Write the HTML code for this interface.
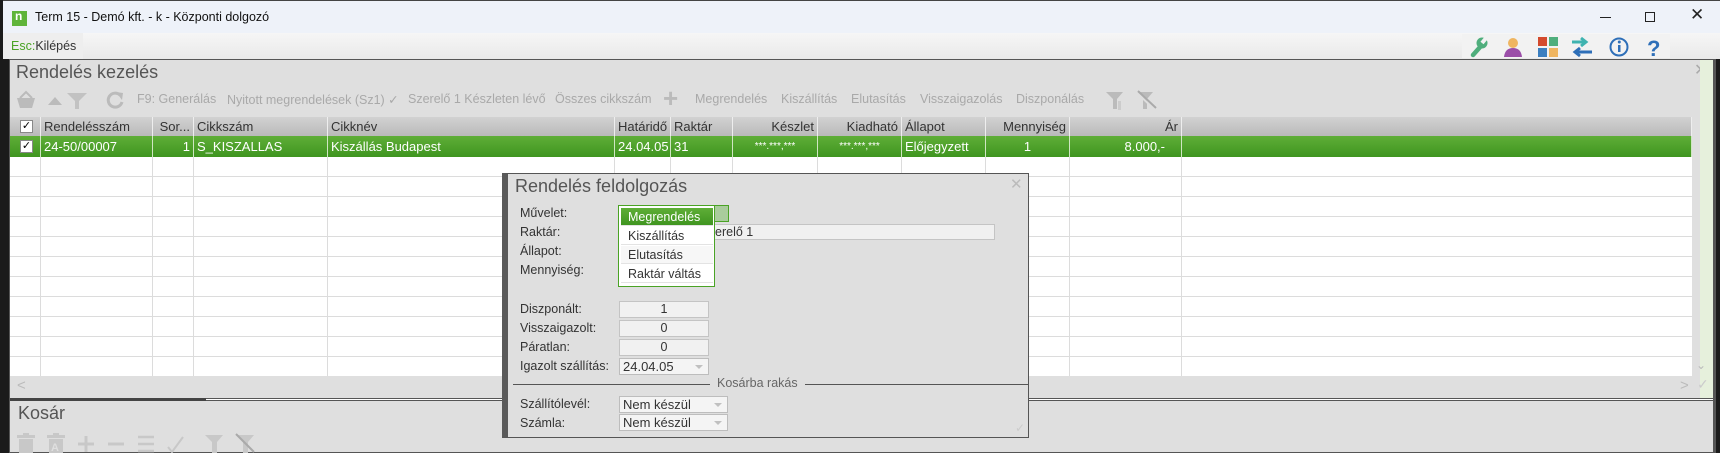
<!DOCTYPE html>
<html><head><meta charset="utf-8"><style>
*{box-sizing:border-box;margin:0;padding:0}
body{width:1720px;height:453px;overflow:hidden;background:#1b1b1b;font-family:"Liberation Sans",Arial,sans-serif;color:#333;position:relative}
.a{position:absolute}
.t{position:absolute;white-space:nowrap}
.tb{font-size:12.5px;color:#a9a9a9;top:92px}
.hd{position:absolute;top:117px;height:19px;background:linear-gradient(#d2d2d2,#b9b9b9);border-right:1px solid #eee;font-size:13px;line-height:19px;padding:0 3px;color:#333}
.gr{position:absolute;top:136px;height:21px;background:linear-gradient(#5fae37,#3f9520);border-right:1px solid #cfe6c2;font-size:13px;line-height:21px;padding:0 3px;color:#fff}
.vl{position:absolute;top:157px;height:219px;width:1px;background:#dcdcdc}
.hl{position:absolute;left:10px;width:1682px;height:1px;background:#dcdcdc}
.lb{position:absolute;left:520px;font-size:12.5px;color:#333}
.fld{position:absolute;left:619px;width:90px;height:17px;background:#f1f1f1;border:1px solid #c4c4c4;font-size:12.5px;line-height:15px;text-align:center}
.dd{position:absolute;left:619px;height:17px;background:#f4f4f4;border:1px solid #bdbdbd;font-size:13px;line-height:15px;padding-left:3px}
.arr{position:absolute;right:5px;top:6px;width:0;height:0;border-left:4px solid transparent;border-right:4px solid transparent;border-top:4px solid #c0c0c0}
.it{position:absolute;left:621px;width:92px;height:18px;font-size:12.5px;line-height:18px;padding-left:7px;border-bottom:1px solid #e3e3e3;background:#fff}
.ck{position:absolute;width:13px;height:13px;background:#fff;border:1px solid #888;font-size:11px;line-height:11px;text-align:center;color:#000}
</style></head><body>
<!-- title bar -->
<div class="a" style="left:3px;top:0;width:1717px;height:33px;background:#eef2f9;border-top:1px solid #444"></div>
<div class="a" style="left:12px;top:11px;width:15px;height:15px;background:#5fb43a"></div>
<div class="t" style="left:15px;top:9px;font-size:12px;color:#fff;font-weight:bold">n</div>
<div class="t" style="left:35px;top:10px;font-size:12.5px;color:#111">Term 15 - Demó kft. - k - Központi dolgozó</div>
<div class="a" style="left:1600px;top:17px;width:11px;height:1px;background:#222"></div>
<div class="a" style="left:1645px;top:12px;width:10px;height:10px;border:1px solid #222"></div>
<div class="t" style="left:1690px;top:5px;font-size:17px;color:#222">✕</div>
<!-- menu strip -->
<div class="a" style="left:3px;top:33px;width:1717px;height:26px;background:linear-gradient(#f6f6f6,#e9e9e9)"></div>
<div class="a" style="left:3px;top:33px;width:80px;height:26px;background:#eeeeee"></div>
<div class="t" style="left:11px;top:39px;font-size:12.5px;color:#4aa325">Esc:<span style="color:#333">Kilépés</span></div>
<div class="a" style="left:1462px;top:34px;width:208px;height:24px;background:#f2f2f2"></div>
<svg class="a" style="left:1468px;top:36px" width="200" height="22">
<path d="M5 19 L13 10" stroke="#4fae7c" stroke-width="4.5" stroke-linecap="round"/>
<circle cx="14" cy="7" r="5.5" fill="#4fae7c"/><path d="M14 7 L19 1" stroke="#f2f2f2" stroke-width="4"/>
<circle cx="45" cy="7" r="5" fill="#efb560"/><path d="M36 21 q1-9 9-9 q8 0 9 9z" fill="#9b4ea8"/>
<rect x="70" y="1" width="9" height="9" fill="#d34a2d"/><rect x="81" y="1" width="9" height="9" fill="#4fae7c"/><rect x="70" y="12" width="9" height="9" fill="#3b7fc0"/><rect x="81" y="12" width="9" height="9" fill="#efb560"/>
<path d="M104 6 h12 M113 2 l5 4 -5 4" stroke="#3fb3b0" stroke-width="3" fill="none"/><path d="M124 16 h-15 M112 12 l-5 4 5 4" stroke="#2e6fb8" stroke-width="3" fill="none"/>
<circle cx="151" cy="11" r="8.5" stroke="#2e6fb8" stroke-width="2" fill="none"/><rect x="150" y="9" width="2.5" height="7" fill="#2e6fb8"/><circle cx="151.3" cy="6" r="1.5" fill="#2e6fb8"/>
<text x="179" y="20" font-size="22" font-weight="bold" fill="#2e6fb8" font-family="Liberation Sans">?</text>
</svg>
<!-- main window -->
<div class="a" style="left:9px;top:59px;width:1707px;height:394px;background:#dfdfdf;border:1px solid #555;border-right:3px solid #555"></div>
<div class="t" style="left:16px;top:62px;font-size:18px;color:#555">Rendelés kezelés</div>
<div class="t" style="left:1694px;top:60px;font-size:16px;color:#aaa">✕</div>
<!-- toolbar -->
<svg class="a" style="left:15px;top:90px" width="110" height="20">
<path d="M2 8 h18 l-3 10 h-12z" fill="#bbb"/><path d="M5 8 l6-6 6 6" stroke="#bbb" stroke-width="2" fill="none"/>
<path d="M33 15 l7-8 7 8z" fill="#bbb"/>
<path d="M52 3 h20 l-8 8 v8 h-4 v-8z" fill="#c2c2c2"/>
<path d="M105 5 a7 7 0 1 0 2 7" stroke="#bbb" stroke-width="3" fill="none"/><path d="M101 2 l7 1 -1 7z" fill="#bbb"/>
</svg>
<div class="t tb" style="left:137px">F9: Generálás</div>
<div class="t tb" style="left:227px">Nyitott megrendelések (Sz1) ✓</div>
<div class="t tb" style="left:408px">Szerelő 1 Készleten lévő</div>
<div class="t tb" style="left:555px">Összes cikkszám</div>
<div class="t" style="left:663px;top:83px;font-size:26px;color:#bbb;font-weight:bold">+</div>
<div class="t tb" style="left:695px">Megrendelés</div>
<div class="t tb" style="left:781px">Kiszállítás</div>
<div class="t tb" style="left:851px">Elutasítás</div>
<div class="t tb" style="left:920px">Visszaigazolás</div>
<div class="t tb" style="left:1016px">Diszponálás</div>
<svg class="a" style="left:1105px;top:90px" width="60" height="22">
<path d="M1 2 h17 l-6 7 v10 h-4 v-10z" fill="#bbb"/><rect x="13" y="11" width="3" height="9" fill="#ccc"/>
<path d="M31 2 h17 l-6 7 v10 h-4 v-10z" fill="#bbb"/><path d="M31 2 l18 17" stroke="#dfdfdf" stroke-width="2"/><path d="M33 1 l18 17" stroke="#aaa" stroke-width="2"/>
</svg>
<!-- grid -->
<div class="a" style="left:10px;top:117px;width:1682px;height:259px;background:#fff"></div>
<div class="a" style="left:1692px;top:117px;width:8px;height:259px;background:#dfdfdf"></div>
<div class="a" style="left:1700px;top:60px;width:13px;height:340px;background:#e6f0dc"></div>
<div class="hd" style="left:10px;width:31px"></div>
<div class="ck" style="left:20px;top:120px">✓</div>
<div class="hd" style="left:41px;width:112px">Rendelésszám</div>
<div class="hd" style="left:153px;width:41px;text-align:right">Sor...</div>
<div class="hd" style="left:194px;width:134px">Cikkszám</div>
<div class="hd" style="left:328px;width:287px">Cikknév</div>
<div class="hd" style="left:615px;width:56px">Határidő</div>
<div class="hd" style="left:671px;width:62px">Raktár</div>
<div class="hd" style="left:733px;width:85px;text-align:right">Készlet</div>
<div class="hd" style="left:818px;width:84px;text-align:right">Kiadható</div>
<div class="hd" style="left:902px;width:84px">Állapot</div>
<div class="hd" style="left:986px;width:84px;text-align:right">Mennyiség</div>
<div class="hd" style="left:1070px;width:112px;text-align:right">Ár</div>
<div class="hd" style="left:1182px;width:510px"></div>
<div class="gr" style="left:10px;width:31px"></div>
<div class="ck" style="left:20px;top:140px">✓</div>
<div class="gr" style="left:41px;width:112px">24-50/00007</div>
<div class="gr" style="left:153px;width:41px;text-align:right">1</div>
<div class="gr" style="left:194px;width:134px">S_KISZALLAS</div>
<div class="gr" style="left:328px;width:287px">Kiszállás Budapest</div>
<div class="gr" style="left:615px;width:56px">24.04.05</div>
<div class="gr" style="left:671px;width:62px">31</div>
<div class="gr" style="left:733px;width:85px;text-align:center;font-size:10px">***.***,***</div>
<div class="gr" style="left:818px;width:84px;text-align:center;font-size:10px">***.***,***</div>
<div class="gr" style="left:902px;width:84px">Előjegyzett</div>
<div class="gr" style="left:986px;width:84px;text-align:center">1</div>
<div class="gr" style="left:1070px;width:112px;text-align:right;padding-right:16px">8.000,-</div>
<div class="gr" style="left:1182px;width:510px"></div>
<div class="vl" style="left:40px"></div><div class="vl" style="left:152px"></div><div class="vl" style="left:193px"></div><div class="vl" style="left:327px"></div><div class="vl" style="left:614px"></div><div class="vl" style="left:670px"></div><div class="vl" style="left:732px"></div><div class="vl" style="left:817px"></div><div class="vl" style="left:901px"></div><div class="vl" style="left:985px"></div><div class="vl" style="left:1069px"></div><div class="vl" style="left:1181px"></div>
<div class="hl" style="top:176px"></div><div class="hl" style="top:196px"></div><div class="hl" style="top:216px"></div><div class="hl" style="top:236px"></div><div class="hl" style="top:256px"></div><div class="hl" style="top:276px"></div><div class="hl" style="top:296px"></div><div class="hl" style="top:316px"></div><div class="hl" style="top:336px"></div><div class="hl" style="top:356px"></div>
<div class="t" style="left:17px;top:377px;font-size:15px;color:#bbb">&lt;</div>
<div class="t" style="left:1680px;top:377px;font-size:15px;color:#bbb">&gt;</div>
<div class="t" style="left:1697px;top:376px;font-size:14px;color:#ccc">✓</div>
<div class="t" style="left:1696px;top:358px;font-size:12px;color:#bbb">⌄</div>
<div class="a" style="left:10px;top:398px;width:1703px;height:3px;background:#fff;border-top:1px solid #555;border-bottom:1px solid #555"></div>
<div class="a" style="left:10px;top:398px;width:196px;height:3px;background:#444"></div>
<div class="t" style="left:18px;top:403px;font-size:18px;color:#555">Kosár</div>
<svg class="a" style="left:0;top:432px" width="270" height="21">
<rect x="19" y="7" width="14" height="14" fill="#c8c8c8"/><rect x="17" y="3" width="18" height="3" fill="#c8c8c8"/><rect x="23" y="1" width="6" height="2" fill="#c8c8c8"/>
<rect x="49" y="7" width="14" height="14" fill="#c8c8c8"/><rect x="47" y="3" width="18" height="3" fill="#c8c8c8"/><rect x="53" y="1" width="6" height="2" fill="#c8c8c8"/>
<text x="51" y="19" font-size="11" font-weight="bold" fill="#dfdfdf" font-family="Liberation Sans">A</text>
<path d="M86 4 v16 M78 12 h16" stroke="#c8c8c8" stroke-width="3"/>
<path d="M108 12 h16" stroke="#c8c8c8" stroke-width="3"/>
<path d="M138 5 h16 M138 12 h16 M138 19 h16" stroke="#c8c8c8" stroke-width="2.5"/>
<path d="M168 15 l4 5 11-15" stroke="#c8c8c8" stroke-width="2" fill="none"/>
<path d="M205 3 h18 l-6 7 v11 h-5 v-11z" fill="#c8c8c8"/>
<path d="M236 3 h18 l-6 7 v11 h-5 v-11z" fill="#c8c8c8"/><path d="M236 2 l18 18" stroke="#aaa" stroke-width="2"/>
</svg>
<!-- dialog -->
<div class="a" style="left:502px;top:173px;width:527px;height:265px;background:#dfdfdf;border:1px solid #555;border-left:6px solid #5a5a5a"></div>
<div class="t" style="left:515px;top:176px;font-size:18px;color:#555">Rendelés feldolgozás</div>
<div class="t" style="left:1010px;top:175px;font-size:15px;color:#bbb">✕</div>
<div class="lb" style="top:206px">Művelet:</div>
<div class="lb" style="top:225px">Raktár:</div>
<div class="lb" style="top:244px">Állapot:</div>
<div class="lb" style="top:263px">Mennyiség:</div>
<div class="a" style="left:700px;top:224px;width:295px;height:16px;background:#f0f0f0;border:1px solid #c4c4c4"></div>
<div class="t" style="left:715px;top:225px;font-size:12.5px;color:#333">erelő 1</div>
<div class="a" style="left:714px;top:205px;width:15px;height:17px;background:#a9cc9c;border:1px solid #4aa325"></div>
<div class="a" style="left:618px;top:205px;width:97px;height:82px;background:#fff;border:1px solid #4aa325"></div>
<div class="it" style="top:208px;background:linear-gradient(#5fae37,#3f9520);color:#fff">Megrendelés</div>
<div class="it" style="top:227px">Kiszállítás</div>
<div class="it" style="top:246px;background:#f7f7f7">Elutasítás</div>
<div class="it" style="top:265px">Raktár váltás</div>
<div class="lb" style="top:302px">Diszponált:</div>
<div class="lb" style="top:321px">Visszaigazolt:</div>
<div class="lb" style="top:340px">Páratlan:</div>
<div class="lb" style="top:359px">Igazolt szállítás:</div>
<div class="fld" style="top:301px">1</div>
<div class="fld" style="top:320px">0</div>
<div class="fld" style="top:339px">0</div>
<div class="dd" style="top:358px;width:90px">24.04.05<div class="arr"></div></div>
<div class="a" style="left:513px;top:384px;width:197px;height:1px;background:#555"></div>
<div class="a" style="left:805px;top:384px;width:223px;height:1px;background:#555"></div>
<div class="t" style="left:717px;top:376px;font-size:12.5px;color:#666">Kosárba rakás</div>
<div class="lb" style="top:397px">Szállítólevél:</div>
<div class="lb" style="top:416px">Számla:</div>
<div class="dd" style="top:396px;width:109px">Nem készül<div class="arr"></div></div>
<div class="dd" style="top:414px;width:109px">Nem készül<div class="arr"></div></div>
<div class="t" style="left:1015px;top:421px;font-size:12px;color:#ccc">✓</div>
</body></html>
